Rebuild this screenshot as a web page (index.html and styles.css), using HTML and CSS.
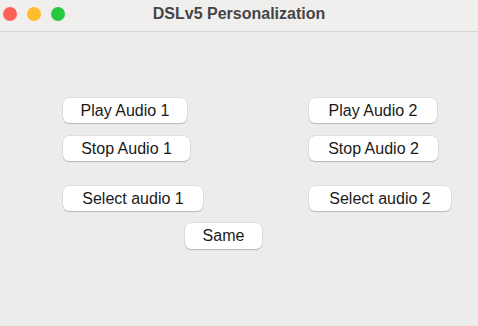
FILE: index.html
```html
<!doctype html>
<html>
<head>
    <meta charset="utf-8">
    <title>DSLv5 Personalization</title>
    <link rel="stylesheet" href="styles.css">
</head>
<body>
<div class="window">
    <div class="titlebar">
        <div class="lights">
            <span class="light red"></span>
            <span class="light yellow"></span>
            <span class="light green"></span>
        </div>
        <div class="title">DSLv5 Personalization</div>
    </div>
    <div class="content">
        <div class="row">
            <button class="btn w-play1">Play Audio 1</button>
            <button class="btn w-play2">Play Audio 2</button>
        </div>
        <div class="row">
            <button class="btn w-stop1">Stop Audio 1</button>
            <button class="btn w-stop2">Stop Audio 2</button>
        </div>
        <div class="row row-select">
            <button class="btn w-sel1">Select audio 1</button>
            <button class="btn w-sel2">Select audio 2</button>
        </div>
        <div class="row row-same">
            <button class="btn w-same">Same</button>
        </div>
    </div>
</div>
</body>
</html>
```

FILE: styles.css
```css
html, body { margin: 0; padding: 0; }
body { width: 478px; height: 326px; background: #ececec; font-family: "Liberation Sans", Arial, sans-serif; overflow: hidden; }

.titlebar { height: 31px; background: #f0efee; border-bottom: 1px solid #d6d6d6; display: flex; align-items: flex-start; position: relative; }
.lights { display: flex; gap: 10px; padding: 7px 0 0 3px; }
.light { width: 14px; height: 14px; border-radius: 50%; display: block; }
.red { background: #fe5f57; }
.yellow { background: #febc2e; }
.green { background: #28c840; }
.title { position: absolute; left: 0; right: 0; top: 0; line-height: 28px; text-align: center; font-weight: bold; font-size: 16px; color: #454545; }

.content { padding: 66px 0 0 63px; display: flex; flex-direction: column; gap: 13px; }
.row { display: flex; height: 25px; }
.row-select { margin-top: 12px; }
.row-same { margin-top: -1px; padding-left: 122px; height: 26px; }

.btn { height: 100%; border: none; border-radius: 6px; background: #fff; box-shadow: 0 0 0 0.5px rgba(0,0,0,0.12), 0 1px 1px rgba(0,0,0,0.18); font-family: "Liberation Sans", Arial, sans-serif; font-size: 16px; color: #1a1a1a; padding: 0; text-align: center; }
.row .btn:nth-child(2) { margin-left: auto; margin-right: 0; }

.w-play1 { width: 124px; }
.w-play2 { width: 128px; margin-right: 41px !important; }
.w-stop1 { width: 127px; }
.w-stop2 { width: 129px; margin-right: 40px !important; }
.w-sel1 { width: 140px; }
.w-sel2 { width: 142px; margin-right: 27px !important; }
.w-same { width: 77px; }
```
